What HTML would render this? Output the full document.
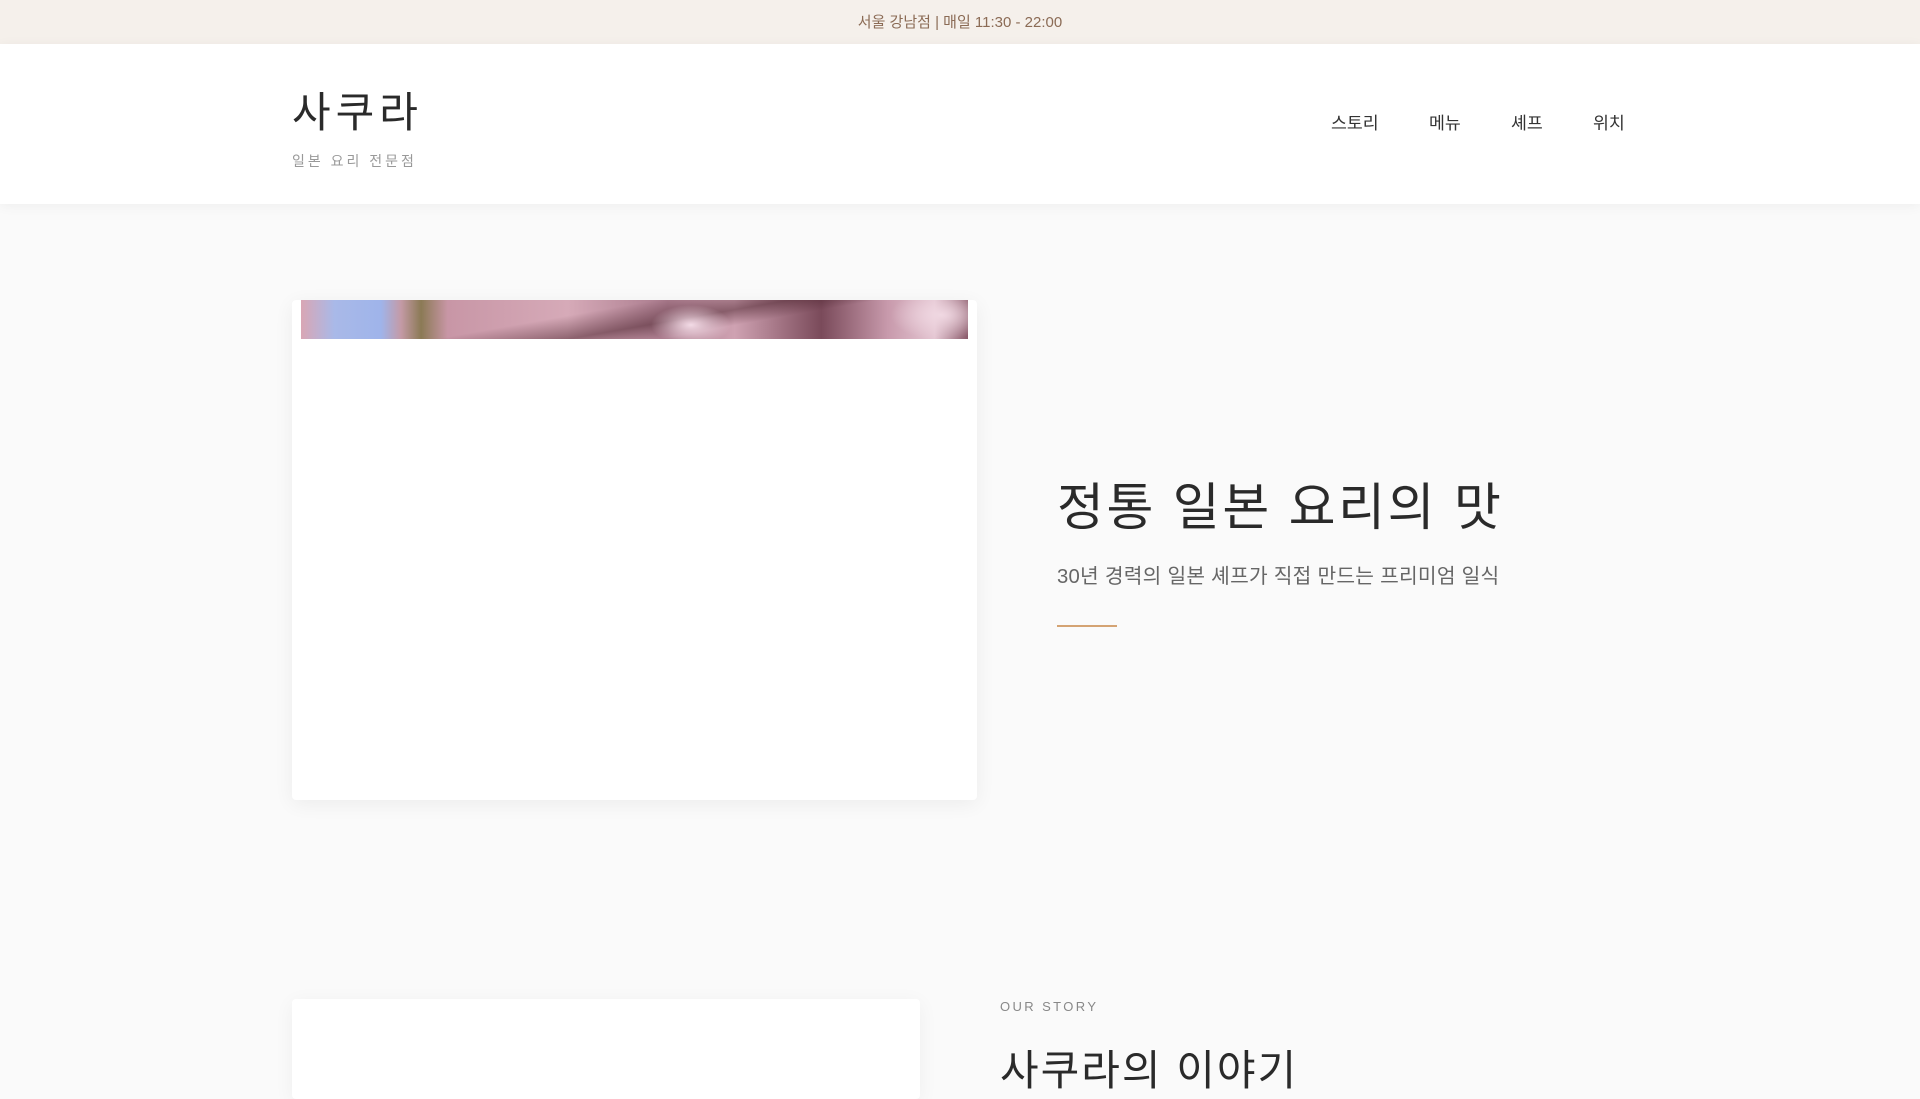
<!DOCTYPE html>
<html><head><meta charset="utf-8"><style>
*{margin:0;padding:0;box-sizing:border-box}
body{width:1920px;height:1080px;overflow:hidden;background:#fafafa;font-family:"Liberation Sans","Noto Sans CJK KR",sans-serif;position:relative}
.top{position:absolute;left:0;top:0;width:1920px;height:44px;background:#f5f0eb;color:#8b6b55;font-size:15px;text-align:center;line-height:46px}
.hdr{position:absolute;left:0;top:44px;width:1920px;height:160px;background:#fff;box-shadow:0 2px 12px rgba(0,0,0,.05)}
.logo{position:absolute;left:292px;top:44px;font-size:42px;color:#2a2a2a;letter-spacing:5px;line-height:1.2}
.sub{position:absolute;left:292px;top:107px;font-size:14px;color:#999;letter-spacing:3px}
.nav{position:absolute;top:65px;font-size:17.3px;color:#333}
.card{position:absolute;left:292px;top:300px;width:685px;height:500px;background:#fff;border-radius:4px;box-shadow:0 4px 20px rgba(0,0,0,.06)}
.img{position:absolute;left:9px;top:0;width:667px;height:39px;background:
radial-gradient(ellipse 40px 20px at 390px 25px,#f3dbe6,transparent),
radial-gradient(ellipse 50px 25px at 640px 15px,#f0d8e2,transparent),
linear-gradient(170deg,transparent 40%,rgba(70,30,40,.5) 55%,transparent 65%),
linear-gradient(90deg,#d9a6b4 0,#a9b9e8 5%,#9fb4ea 12%,#c49aa6 15%,#8b7a55 18%,#c896a6 22%,#d6aab8 40%,#a97a8c 55%,#cfa2b2 65%,#7a4a5a 78%,#c89aac 88%,#e4c6d2 95%,#8a5a6a 100%)}
h1{position:absolute;left:1057px;top:466px;font-size:51px;font-weight:400;color:#2a2a2a;letter-spacing:2.6px;white-space:nowrap}
.p{position:absolute;left:1057px;top:559px;font-size:20.3px;letter-spacing:.25px;color:#666;white-space:nowrap}
.line{position:absolute;left:1057px;top:625px;width:60px;height:2px;background:#d4a373}
.card2{position:absolute;left:292px;top:999px;width:628px;height:100px;background:#fff;border-radius:4px;box-shadow:0 4px 20px rgba(0,0,0,.05)}
.os{position:absolute;left:1000px;top:999px;font-size:13px;color:#888;letter-spacing:2.4px}
h2{position:absolute;left:1000px;top:1037px;font-size:42px;font-weight:400;color:#2a2a2a;letter-spacing:2px;white-space:nowrap}
</style></head><body>
<div class="top">서울 강남점 | 매일 11:30 - 22:00</div>
<div class="hdr">
<div class="logo">사쿠라</div>
<div class="sub">일본 요리 전문점</div>
<div class="nav" style="left:1331px">스토리</div>
<div class="nav" style="left:1429px">메뉴</div>
<div class="nav" style="left:1511px">셰프</div>
<div class="nav" style="left:1593px">위치</div>
</div>
<div class="card"><div class="img"></div></div>
<h1>정통 일본 요리의 맛</h1>
<div class="p">30년 경력의 일본 셰프가 직접 만드는 프리미엄 일식</div>
<div class="line"></div>
<div class="card2"></div>
<div class="os">OUR STORY</div>
<h2>사쿠라의 이야기</h2>
</body></html>
